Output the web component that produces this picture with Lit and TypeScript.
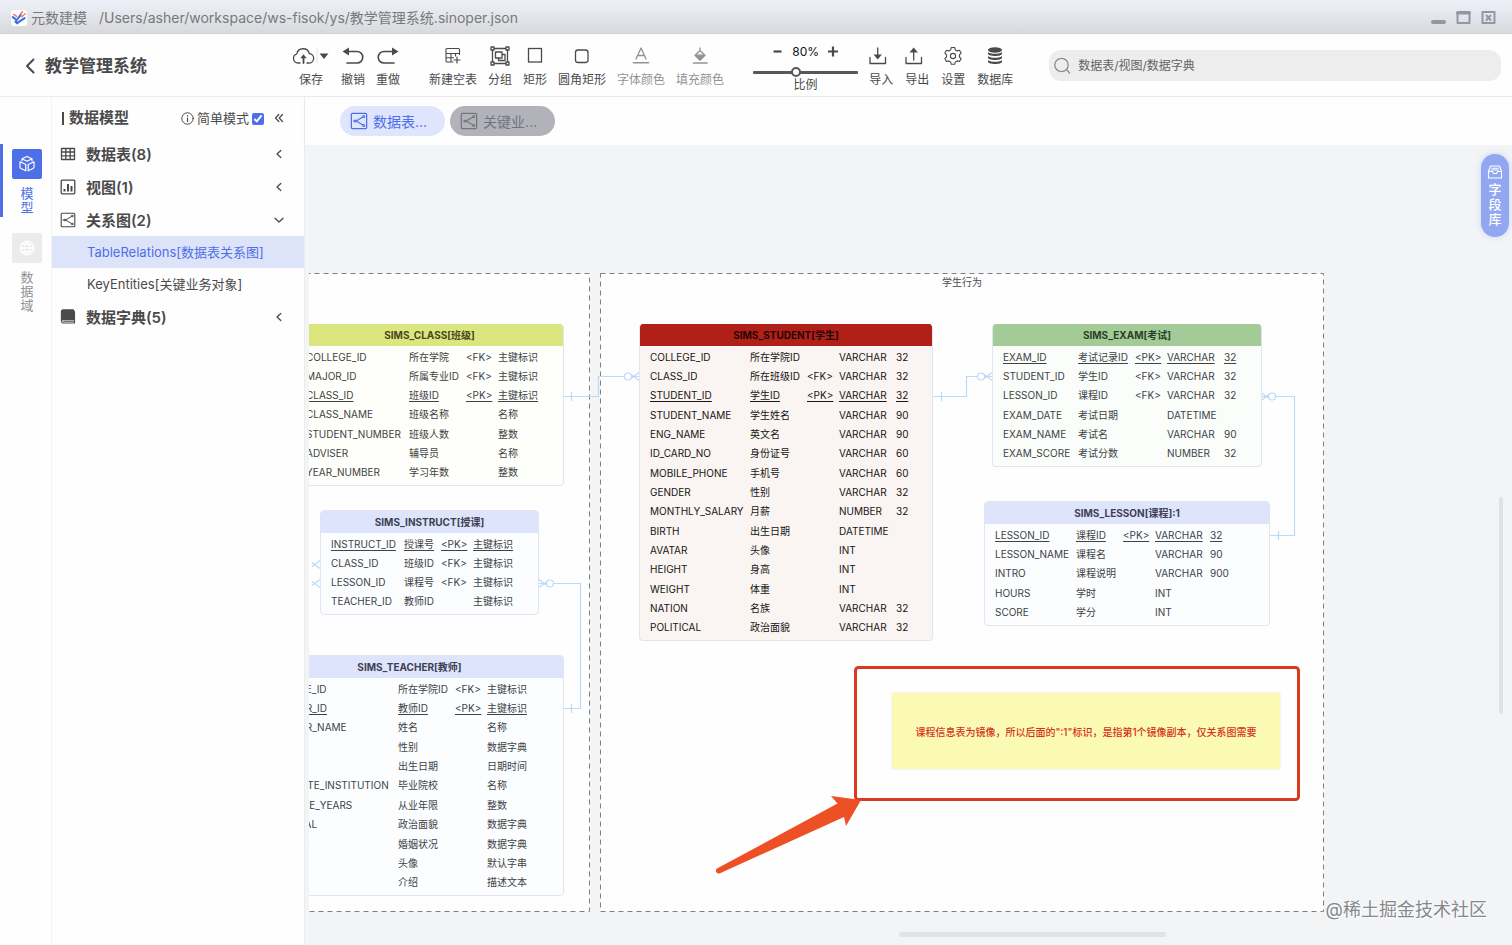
import { LitElement, html, svg, css, nothing, TemplateResult } from "lit";
import { customElement, property } from "lit/decorators.js";
import { classMap } from "lit/directives/class-map.js";
import { styleMap } from "lit/directives/style-map.js";

type Row = { cells: string[]; key?: boolean };
type Entity = {
  title: string;
  tone: string;
  x: number;
  y: number;
  width: number;
  cols: number[];
  rows: Row[];
};

const r = (...cells: string[]): Row => ({ cells });
const pk = (...cells: string[]): Row => ({ cells, key: true });

const ENTITIES: Entity[] = [
  {
    title: "SIMS_CLASS[班级]", tone: "lime", x: -14, y: 178, width: 269, cols: [103, 57, 32, 66],
    rows: [
      r("COLLEGE_ID", "所在学院", "<FK>", "主键标识"),
      r("MAJOR_ID", "所属专业ID", "<FK>", "主键标识"),
      pk("CLASS_ID", "班级ID", "<PK>", "主键标识"),
      r("CLASS_NAME", "班级名称", "", "名称"),
      r("STUDENT_NUMBER", "班级人数", "", "整数"),
      r("ADVISER", "辅导员", "", "名称"),
      r("YEAR_NUMBER", "学习年数", "", "整数"),
    ],
  },
  {
    title: "SIMS_INSTRUCT[授课]", tone: "blue", x: 11, y: 365, width: 219, cols: [73, 37, 32, 66],
    rows: [
      pk("INSTRUCT_ID", "授课号", "<PK>", "主键标识"),
      r("CLASS_ID", "班级ID", "<FK>", "主键标识"),
      r("LESSON_ID", "课程号", "<FK>", "主键标识"),
      r("TEACHER_ID", "教师ID", "", "主键标识"),
    ],
  },
  {
    title: "SIMS_TEACHER[教师]", tone: "blue", x: -54, y: 510, width: 309, cols: [132, 57, 32, 77],
    rows: [
      r("COLLEGE_ID", "所在学院ID", "<FK>", "主键标识"),
      pk("TEACHER_ID", "教师ID", "<PK>", "主键标识"),
      r("TEACHER_NAME", "姓名", "", "名称"),
      r("GENDER", "性别", "", "数据字典"),
      r("BIRTH", "出生日期", "", "日期时间"),
      r("GRADUATE_INSTITUTION", "毕业院校", "", "名称"),
      r("PRACTICE_YEARS", "从业年限", "", "整数"),
      r("POLITICAL", "政治面貌", "", "数据字典"),
      r("MARITAL", "婚姻状况", "", "数据字典"),
      r("AVATAR", "头像", "", "默认字串"),
      r("INTRO", "介绍", "", "描述文本"),
    ],
  },
  {
    title: "SIMS_STUDENT[学生]", tone: "red", x: 330, y: 178, width: 294, cols: [100, 57, 32, 57, 37],
    rows: [
      r("COLLEGE_ID", "所在学院ID", "", "VARCHAR", "32"),
      r("CLASS_ID", "所在班级ID", "<FK>", "VARCHAR", "32"),
      pk("STUDENT_ID", "学生ID", "<PK>", "VARCHAR", "32"),
      r("STUDENT_NAME", "学生姓名", "", "VARCHAR", "90"),
      r("ENG_NAME", "英文名", "", "VARCHAR", "90"),
      r("ID_CARD_NO", "身份证号", "", "VARCHAR", "60"),
      r("MOBILE_PHONE", "手机号", "", "VARCHAR", "60"),
      r("GENDER", "性别", "", "VARCHAR", "32"),
      r("MONTHLY_SALARY", "月薪", "", "NUMBER", "32"),
      r("BIRTH", "出生日期", "", "DATETIME", ""),
      r("AVATAR", "头像", "", "INT", ""),
      r("HEIGHT", "身高", "", "INT", ""),
      r("WEIGHT", "体重", "", "INT", ""),
      r("NATION", "名族", "", "VARCHAR", "32"),
      r("POLITICAL", "政治面貌", "", "VARCHAR", "32"),
    ],
  },
  {
    title: "SIMS_EXAM[考试]", tone: "green", x: 683, y: 178, width: 270, cols: [75, 57, 32, 57, 38],
    rows: [
      pk("EXAM_ID", "考试记录ID", "<PK>", "VARCHAR", "32"),
      r("STUDENT_ID", "学生ID", "<FK>", "VARCHAR", "32"),
      r("LESSON_ID", "课程ID", "<FK>", "VARCHAR", "32"),
      r("EXAM_DATE", "考试日期", "", "DATETIME", ""),
      r("EXAM_NAME", "考试名", "", "VARCHAR", "90"),
      r("EXAM_SCORE", "考试分数", "", "NUMBER", "32"),
    ],
  },
  {
    title: "SIMS_LESSON[课程]:1", tone: "blue", x: 675, y: 356, width: 286, cols: [81, 47, 32, 55, 60],
    rows: [
      pk("LESSON_ID", "课程ID", "<PK>", "VARCHAR", "32"),
      r("LESSON_NAME", "课程名", "", "VARCHAR", "90"),
      r("INTRO", "课程说明", "", "VARCHAR", "900"),
      r("HOURS", "学时", "", "INT", ""),
      r("SCORE", "学分", "", "INT", ""),
    ],
  },
];

const draw = (w: number, h: number, body: TemplateResult) => html`
  <svg class="icon" width=${w} height=${h} viewBox="0 0 ${w} ${h}" fill="none" stroke="currentColor"
    stroke-width="1.3" stroke-linecap="round" stroke-linejoin="round" aria-hidden="true">${body}</svg>`;

const ICONS: Record<string, () => TemplateResult> = {
  logo: () => html`<svg class="icon" width="16" height="16" viewBox="0 0 16 16" fill="none" stroke-linecap="round" aria-hidden="true">
    <rect width="16" height="16" rx="3" fill="#fff"/>
    <path d="M1.800 7.200l2.400 1.600M6 13.200L13.600 8.200" stroke="#3f6fe8" stroke-width="2.200"/>
    <path d="M4.400 11.600L9.800 4.800M4.400 11.600l2 1.500" stroke="#3f6fe8" stroke-width="2"/>
    <path d="M2.800 4.400l2.800 2M9 4.600l2.600-2.800M10.800 6.800l3.400-3" stroke="#f0735f" stroke-width="1.400"/></svg>`,
  back: () => draw(12, 18, svg`<path d="M9.500 2.500L3 9l6.500 6.500" stroke-width="2"/>`),
  save: () => draw(38, 22, svg`
    <path d="M8 18H6a4.600 4.600 0 0 1-1.200-9A6.400 6.400 0 0 1 17.300 8.600A4.700 4.700 0 0 1 16.500 18H15"/>
    <path d="M11.500 18v-6" stroke-width="1.800"/><path d="M11.500 9.200l3.200 4h-6.400z" fill="currentColor" stroke="none"/>
    <path d="M25 3v15" stroke="#e6e6e6" stroke-width="1"/>
    <path d="M27.500 8.500h9L32 14z" fill="currentColor" stroke="none"/>`),
  undo: () => draw(24, 22, svg`<path d="M6 6.500h10a5.200 5.200 0 0 1 0 11.500H6" stroke-width="1.600"/>
    <path d="M1.500 6.500L8 2.500v8z" fill="currentColor" stroke="none"/>`),
  redo: () => draw(24, 22, svg`<path d="M18 6.500H8A5.200 5.200 0 0 0 8 18h10" stroke-width="1.600"/>
    <path d="M22.500 6.500L16 2.500v8z" fill="currentColor" stroke="none"/>`),
  newTable: () => draw(20, 22, svg`<path d="M16.500 9.500V4.500a1 1 0 0 0-1-1H4a1 1 0 0 0-1 1v11.500a1 1 0 0 0 1 1h6M3 8.500h13.500M3 12.800h7.500M8 8.500v8.500M12.500 8.500v2.500" stroke-width="1.100"/>
    <path d="M14 12v6M11 15h6" stroke-width="1.200"/>`),
  group: () => draw(22, 22, svg`<path d="M3.500 3.500h15v15h-15z"/>
    <path d="M6.500 7h6.500v6H6.500zM13 9.500h3v6H9.500V13"/>
    <g fill="#fff"><rect x="2" y="2" width="3" height="3"/><rect x="17" y="2" width="3" height="3"/>
    <rect x="2" y="17" width="3" height="3"/><rect x="17" y="17" width="3" height="3"/></g>`),
  rect: () => draw(22, 22, svg`<rect x="4.500" y="3.500" width="13" height="13.500" stroke-linejoin="miter"/>`),
  round: () => draw(22, 22, svg`<rect x="4.500" y="5" width="12.500" height="12.500" rx="2.500"/>`),
  fontColor: () => draw(22, 22, svg`<path d="M6 14L11 3l5 11M7.800 10.500h6.500"/><path d="M3.500 17.800h15" stroke-width="1.600"/>`),
  fillColor: () => draw(22, 22, svg`<path d="M11 5.500l4.800 4.700L11 15l-4.800-4.800zM11 5.500V3"/>
    <path d="M6.200 10.200h9.600L11 15z" fill="currentColor"/><path d="M4.500 18h13.500" stroke-width="1.600"/>`),
  minus: () => draw(12, 12, svg`<path d="M1.500 5.500h8" stroke-width="2.200" stroke-linecap="butt"/>`),
  plus: () => draw(12, 12, svg`<path d="M1 5.500h10M6 .5v10" stroke-width="2.200" stroke-linecap="butt"/>`),
  importIcon: () => draw(24, 22, svg`<path d="M1 12.500v6h15.500v-6M8.700 3v9"/><path d="M8.700 14.500L4.500 9.500h8.400z" fill="currentColor" stroke="none"/>`),
  exportIcon: () => draw(24, 22, svg`<path d="M1 12.500v6h15.500v-6M8.700 15V6"/><path d="M8.700 2.500l4.200 5H4.500z" fill="currentColor" stroke="none"/>`),
  gear: () => draw(22, 22, svg`<path d="M9.300 2.500h3.400l.7 2.400 1.800 1 2.300-.6 1.600 2.800-1.600 1.700v2.200l1.600 1.700-1.600 2.800-2.300-.6-1.800 1-.7 2.400H9.300l-.7-2.400-1.800-1-2.300.6-1.600-2.800 1.600-1.700V9.800L2.900 8.100l1.600-2.800 2.300.6 1.800-1z" stroke-width="1.100"/>
    <circle cx="11" cy="11" r="2.600" stroke-width="1.100"/>`),
  database: () => draw(22, 22, svg`<g fill="currentColor" stroke="none"><ellipse cx="11" cy="5" rx="7" ry="2.800"/>
    <path d="M4 7c1 2.400 13 2.400 14 0v1.800c0 3-14 3-14 0zM4 11c1 2.400 13 2.400 14 0v1.800c0 3-14 3-14 0zM4 15c1 2.400 13 2.400 14 0v1.800c0 3-14 3-14 0z"/></g>`),
  search: () => draw(18, 18, svg`<circle cx="8.500" cy="8" r="6.700"/><path d="M13.500 12.500l3 3.500"/>`),
  info: () => draw(13, 13, svg`<circle cx="6.500" cy="6.500" r="5.700" stroke-width="1"/><path d="M6.500 6v3.500" stroke-width="1.200"/><path d="M6.500 3.700v.2" stroke-width="1.400"/>`),
  fold: () => draw(10, 10, svg`<path d="M4.800 1.500L1.500 5l3.300 3.500M8.500 1.500L5.200 5l3.300 3.500" stroke-width="1.200"/>`),
  left: () => draw(10, 10, svg`<path d="M6.800 1.500L3 5l3.800 3.500"/>`),
  down: () => draw(10, 10, svg`<path d="M1 3.200L5 7l4-3.800"/>`),
  grid: () => draw(16, 16, svg`<path d="M1.500 2.500h13v11h-13zM1.500 6h13M1.500 9.800h13M5.800 2.500v11M10.200 2.500v11"/>`),
  chart: () => draw(16, 16, svg`<rect x="1.200" y="1.200" width="13.600" height="13.600" rx="1"/><path d="M4.500 10v2.500M8 5v7.500M11.500 7v5.500" stroke-width="2" stroke-linecap="butt"/>`),
  relation: () => draw(16, 16, relationShape()),
  tabRelation: () => draw(18, 18, svg`<g transform="scale(1.125)">${relationShape()}</g>`),
  book: () => draw(16, 16, svg`<path d="M3 1h10.500v9.500H3a1.500 1.500 0 0 0-1.500 1.200V2.500A1.500 1.500 0 0 1 3 1z" fill="currentColor"/>
    <path d="M1.500 12.300A1.600 1.600 0 0 0 3.100 14h11.400V2.500M3.500 12.300h11" stroke-width="1.100"/>`),
  cube: () => draw(18, 18, svg`<path d="M9 1.500l5 2.300-5 2.400-5-2.400zM2 6.800l5.800 2.700v6.300L3 13.500a1.500 1.500 0 0 1-1-1.400zM16 6.800l-5.800 2.700v6.300l4.800-2.300a1.500 1.500 0 0 0 1-1.400zM4 3.800v2M14 3.800v2" stroke-width="1.200"/>`),
  globe: () => draw(18, 18, svg`<circle cx="9" cy="9" r="6.800"/><path d="M2.500 9h13M9 2.500c-4 4-4 9 0 13M9 2.500c4 4 4 9 0 13M3.500 5.500h11M3.500 12.500h11"/>`),
  inbox: () => draw(16, 14, svg`<path d="M1.500 6.500L3.500 1h9l2 5.500V13h-13zM1.500 6.500h4l1 2h3l1-2h4M5 3.300h6M4.500 5h7" stroke-width="1.100"/>`),
};

function relationShape() {
  return svg`<rect x="1.200" y="1.200" width="13.600" height="13.600" rx="1" stroke-width="1.100"/>
    <path d="M11.500 4.500L5.500 8l6 3.500M3 8h1.500" stroke-width="1"/><circle cx="4.800" cy="8" r=".9" stroke-width=".9"/>
    <circle cx="12.200" cy="4" r=".9" stroke-width=".9"/><circle cx="12.200" cy="12" r=".9" stroke-width=".9"/>`;
}

@customElement("entity-card")
class EntityCard extends LitElement {
  @property({ attribute: false }) entity!: Entity;

  static styles = css`
    :host { display: block; }
    .card { border: 1px solid #e0e5f2; border-radius: 4px; overflow: hidden; color: #404245; }
    .title { margin: 0; height: 22px; line-height: 22px; text-align: center; font-size: 10px; font-weight: 700; }
    .body { padding: 1px 0 3px 10px; }
    table { table-layout: fixed; border-collapse: collapse; width: 100%; font-size: 10px; line-height: 14px; }
    td { padding: 0; white-space: nowrap; vertical-align: middle; }
    .key td { text-decoration: underline; text-underline-offset: 2px; }
    .blue { background: #fbfdff; }
    .blue .title { background: #dde4fb; color: #3d4052; }
    .lime { background: #fefffa; }
    .lime .title { background: #dce67f; color: #45481f; }
    .green { background: #fafdfa; }
    .green .title { background: #a3cb98; color: #2c3f29; }
    .red { background: #faf4f2; color: #161414; }
    .red .title { background: #b02018; color: #250503; }
    .lime, .green, .red { border-top: 0; margin-top: 1px; }
  `;

  render() {
    const { title, tone, cols, rows } = this.entity;
    const height = Math.round((rows.length * 58) / 3);
    return html`
      <section class=${classMap({ card: true, [tone]: true })}>
        <h3 class="title">${title}</h3>
        <div class="body">
          <table style=${styleMap({ height: `${height}px` })}>
            <colgroup>${cols.map((w) => html`<col style=${styleMap({ width: `${w}px` })} />`)}</colgroup>
            <tbody>
              ${rows.map((row) => html`<tr class=${row.key ? "key" : ""}>${row.cells.map((c) => html`<td>${c}</td>`)}</tr>`)}
            </tbody>
          </table>
        </div>
      </section>`;
  }
}

@customElement("app-root")
class AppRoot extends LitElement {
  static styles = css`
    :host {
      display: flex; flex-direction: column; height: 100vh; overflow: hidden;
      background: #fefefe; color: #4a4a4c; font-size: 12px;
      font-family: Inter, "Noto Sans CJK SC", sans-serif;
    }
    * { box-sizing: border-box; }
    button { font: inherit; color: inherit; background: none; border: 0; padding: 0; cursor: pointer; }
    .icon { display: block; flex: none; }

    .titlebar {
      flex: none; display: flex; align-items: center; height: 34px; padding: 2px 16px 0 11px;
      background: linear-gradient(#eff1fa, #d8d9dc); border-bottom: 1px solid #d3d3d6;
      color: #77797c; font-size: 14px; line-height: 20px; white-space: nowrap;
    }
    .product { margin: 0 12px 0 4px; }
    .path { flex: 1; }
    .window { display: flex; gap: 10px; color: #9496a6; }

    .toolbar { flex: none; display: flex; height: 63px; padding-right: 11px; border-bottom: 1px solid #ebebeb; }
    .brand { flex: none; display: flex; align-items: center; gap: 9px; width: 292px; padding: 2px 0 0 24px; }
    .brand h1 { margin: 0; font-size: 17px; line-height: 24px; font-weight: 600; }
    .tools { flex: none; display: flex; gap: 11px; padding-top: 11px; }
    .tools.draw { margin-left: 29px; }
    .tools.io { gap: 12px; margin-left: 11px; }
    .tool { display: flex; flex-direction: column; align-items: center; gap: 5px; height: 43px; line-height: 16px; white-space: nowrap; }
    .tool.off { color: #929296; }
    .scale { flex: none; display: flex; flex-direction: column; align-items: center; width: 105px; margin-left: 29px; padding-top: 9px; }
    .stepper { display: flex; align-items: center; gap: 8px; color: #4a4a4c; line-height: 18px; }
    .stepper output { color: #111; font-size: 12px; }
    .range { appearance: none; width: 100%; height: 11px; margin: 6px 0 0; background: none; }
    .range::-webkit-slider-runnable-track { height: 3px; background: #58585a; border-radius: 1px; }
    .range::-webkit-slider-thumb { appearance: none; width: 10px; height: 10px; margin-top: -4px; border: 2px solid #58585a; border-radius: 50%; background: #fff; }
    .scale label { line-height: 14px; }
    .search { flex: 1; display: flex; align-items: center; gap: 7px; height: 31px; margin: 16px 0 0 36px; padding-left: 4px; border-radius: 12px; background: #ededed; color: #8b8d90; }
    .search input { flex: 1; min-width: 0; border: 0; outline: 0; padding: 0; background: none; font: inherit; color: #555; }
    .search input::placeholder { color: #606367; }

    .body { flex: 1; display: flex; min-height: 0; }
    .rail { flex: none; width: 52px; padding-top: 47px; border-right: 1px solid #f4f4f4; }
    .rail button { display: flex; flex-direction: column; align-items: center; gap: 7px; width: 100%; padding: 5px 0 3px; border-left: 3px solid transparent; color: #8f9194; line-height: 14px; }
    .rail button + button { margin-top: 11px; }
    .rail .chip { display: grid; place-items: center; width: 30px; height: 30px; border-radius: 2px; background: #ebebeb; color: #fff; }
    .rail .label { width: 13px; font-size: 13px; }
    .rail .on { color: #4f6fe8; border-left-color: #4f6fe8; }
    .rail .on .chip { background: #4f6fe8; }

    .side { flex: none; width: 253px; border-right: 1px solid #ececec; }
    .side header { display: flex; align-items: center; height: 40px; padding: 2px 20px 0 10px; }
    .side h2 { flex: 1; margin: 0; display: flex; align-items: center; gap: 5px; font-size: 15px; line-height: 20px; font-weight: 600; }
    .side h2::before { content: ""; width: 2px; height: 13px; background: #4a4a4c; }
    .simple { display: flex; align-items: center; gap: 3px; font-size: 13px; line-height: 18px; }
    .simple input { width: 12px; height: 12px; margin: 2px 0 0; accent-color: #4f6fe8; }
    .fold { margin-left: 10px; }
    .node { display: flex; align-items: center; gap: 10px; width: 100%; height: 33px; padding: 0 20px 0 8px; font-size: 15px; font-weight: 600; text-align: left; }
    .node span { flex: 1; }
    .leaf { display: block; height: 32px; padding-left: 35px; font-size: 13px; line-height: 33px; color: inherit; text-decoration: none; }
    .leaf.on { background: #dde4fa; color: #4f6fe8; }

    .main { flex: 1; min-width: 0; display: flex; flex-direction: column; }
    .tabs { flex: none; display: flex; gap: 5px; height: 48px; padding: 9px 0 0 35px; box-shadow: 0 2px 4px #0000000a; position: relative; }
    .tab { display: flex; align-items: center; gap: 5px; height: 30px; padding: 0 18px 0 10px; border-radius: 15px; font-size: 14px; background: #b2b2bb; color: #74747d; }
    .tab.on { background: #dee5fc; color: #4f6fe8; }
    .canvas { flex: 1; min-height: 0; position: relative; padding-left: 4px; background: #f2f4f6; }
    .stage { position: relative; height: 100%; overflow: hidden; }
    .links { position: absolute; inset: 0; width: 100%; height: 100%; }
    .entity { position: absolute; }
    .group-name { position: absolute; left: 292px; top: 130px; width: 722px; text-align: center; font-size: 10px; line-height: 15px; }
    .note { position: absolute; left: 583px; top: 548px; width: 388px; height: 76px; display: grid; place-items: center; background: #fbfab4; color: #d5321c; font-size: 10px; font-weight: 500; white-space: nowrap; box-shadow: 0 0 2px #0000001a; }
    .mark { position: absolute; inset: 0; width: 100%; height: 100%; }
    .library { position: absolute; right: 3px; top: 9px; display: flex; flex-direction: column; align-items: center; gap: 3px; width: 28px; height: 83px; padding-top: 11px; border-radius: 14px; background: #92a7f2; color: #fff; font-size: 13px; line-height: 15px; font-weight: 500; box-shadow: 0 0 6px #92a7f266; }
    .library span { width: 13px; }
    .vbar { position: absolute; right: 9px; top: 352px; width: 4px; height: 217px; border-radius: 2px; background: #e0e2e5; }
    .hbar { position: absolute; left: 594px; bottom: 8px; width: 267px; height: 5px; border-radius: 2px; background: #e0e2e5; }
    .credit { position: absolute; right: 25px; bottom: 22px; font-size: 18px; line-height: 26px; color: #85888c; text-shadow: 0 0 2px #fff, 1px 1px 0 #fff; }
  `;

  private tool(icon: string, label: string, off = false) {
    return html`<button class=${classMap({ tool: true, off })} ?disabled=${off}>${ICONS[icon]()}${label}</button>`;
  }

  private node(icon: string, label: string, open = false) {
    return html`<button class="node" aria-expanded=${open}>${ICONS[icon]()}<span>${label}</span>${open ? ICONS.down() : ICONS.left()}</button>`;
  }

  /* "Zero or many" end of a relation: edge is the card side, dir points away from the card. */
  private many(edge: number, y: number, dir: number, ring = true) {
    const p = (n: number) => edge + n * dir;
    return svg`<path d="M${p(0)} ${y - 4}L${p(8)} ${y + 2}M${p(0)} ${y + 4}L${p(8)} ${y - 2}"/>
      ${ring ? svg`<circle cx=${p(11)} cy=${y} r="3.500" fill="#fff"/>` : nothing}`;
  }

  render() {
    return html`
      <header class="titlebar">
        ${ICONS.logo()}<span class="product">元数建模</span>
        <span class="path">/Users/asher/workspace/ws-fisok/ys/教学管理系统.sinoper.json</span>
        <div class="window">
          <button aria-label="最小化">${draw(15, 15, svg`<path d="M2 12h11" stroke-width="4"/>`)}</button>
          <button aria-label="最大化">${draw(15, 15, svg`<path d="M1.500 2h12v11h-12z" stroke-width="2"/><path d="M1.500 3h12" stroke-width="3"/>`)}</button>
          <button aria-label="关闭">${draw(15, 15, svg`<path d="M1.500 2h12v11h-12z" stroke-width="2"/><path d="M5.500 5.500l4 4.500M9.500 5.500l-4 4.500" stroke-width="2"/>`)}</button>
        </div>
      </header>

      <div class="toolbar">
        <div class="brand"><button aria-label="返回">${ICONS.back()}</button><h1>教学管理系统</h1></div>
        <div class="tools">
          ${this.tool("save", "保存")}${this.tool("undo", "撤销")}${this.tool("redo", "重做")}
        </div>
        <div class="tools draw">
          ${this.tool("newTable", "新建空表")}${this.tool("group", "分组")}${this.tool("rect", "矩形")}
          ${this.tool("round", "圆角矩形")}${this.tool("fontColor", "字体颜色", true)}${this.tool("fillColor", "填充颜色", true)}
        </div>
        <div class="scale">
          <div class="stepper">
            <button aria-label="缩小">${ICONS.minus()}</button><output>80%</output><button aria-label="放大">${ICONS.plus()}</button>
          </div>
          <input class="range" id="scale" type="range" min="20" max="170" value="80" />
          <label for="scale">比例</label>
        </div>
        <div class="tools io">
          ${this.tool("importIcon", "导入")}${this.tool("exportIcon", "导出")}${this.tool("gear", "设置")}${this.tool("database", "数据库")}
        </div>
        <label class="search">${ICONS.search()}<input type="text" aria-label="搜索" placeholder="数据表/视图/数据字典" /></label>
      </div>

      <div class="body">
        <nav class="rail">
          <button class="on"><span class="chip">${ICONS.cube()}</span><span class="label">模型</span></button>
          <button><span class="chip">${ICONS.globe()}</span><span class="label">数据域</span></button>
        </nav>
        <aside class="side">
          <header>
            <h2>数据模型</h2>
            <label class="simple">${ICONS.info()}简单模式 <input type="checkbox" checked /></label>
            <button class="fold" aria-label="收起">${ICONS.fold()}</button>
          </header>
          ${this.node("grid", "数据表(8)")}
          ${this.node("chart", "视图(1)")}
          ${this.node("relation", "关系图(2)", true)}
          <a class="leaf on" href="#table-relations">TableRelations[数据表关系图]</a>
          <a class="leaf" href="#key-entities">KeyEntities[关键业务对象]</a>
          ${this.node("book", "数据字典(5)")}
        </aside>

        <main class="main">
          <div class="tabs">
            <button class="tab on">${ICONS.tabRelation()}数据表...</button>
            <button class="tab">${ICONS.tabRelation()}关键业...</button>
          </div>
          <div class="canvas">
            <div class="stage">
              <svg class="links" fill="none" aria-hidden="true">
                <g fill="#fefefe" stroke="#808080" stroke-dasharray="5 4">
                  <rect x="-120.500" y="128.500" width="401" height="638"/>
                  <rect x="291.500" y="128.500" width="723" height="638"/>
                </g>
                <g stroke="#bbdaf8" stroke-width="1.200">
                  <path d="M254 251.500H289.500V231.500H330M262.500 247v9"/>${this.many(330, 231.5, -1)}
                  <path d="M624 251.500H657.500V231.500H683M632.500 247v9"/>${this.many(683, 231.5, -1)}
                  <path d="M953 251.500H985.500V390.500H961M969.500 386v9"/>${this.many(952, 251.5, 1)}
                  <path d="M230 438.500H271.500V563.500H254M262.500 559v9"/>${this.many(230, 438.5, 1)}
                  ${this.many(11, 419.5, -1, false)}${this.many(11, 438.5, -1, false)}
                </g>
              </svg>
              <div class="group-name">学生行为</div>
              ${ENTITIES.map((e) => html`<entity-card class="entity" .entity=${e}
                style=${styleMap({ left: `${e.x}px`, top: `${e.y}px`, width: `${e.width}px` })}></entity-card>`)}
              <div class="note">课程信息表为镜像，所以后面的":1"标识，是指第1个镜像副本，仅关系图需要</div>
              <svg class="mark" fill="none" aria-hidden="true">
                <rect x="546.500" y="522.500" width="443" height="132" rx="3" stroke="#d93a22" stroke-width="3"/>
                <path d="M552 655l-30-4 6.500 7.500L408 723.500c-2.500 2-.5 6 3 4.800L535 672l2 9z" fill="#ee5026"/>
              </svg>
            </div>
            <button class="library">${ICONS.inbox()}<span>字段库</span></button>
            <div class="vbar"></div>
            <div class="hbar"></div>
            <div class="credit">@稀土掘金技术社区</div>
          </div>
        </main>
      </div>`;
  }
}
